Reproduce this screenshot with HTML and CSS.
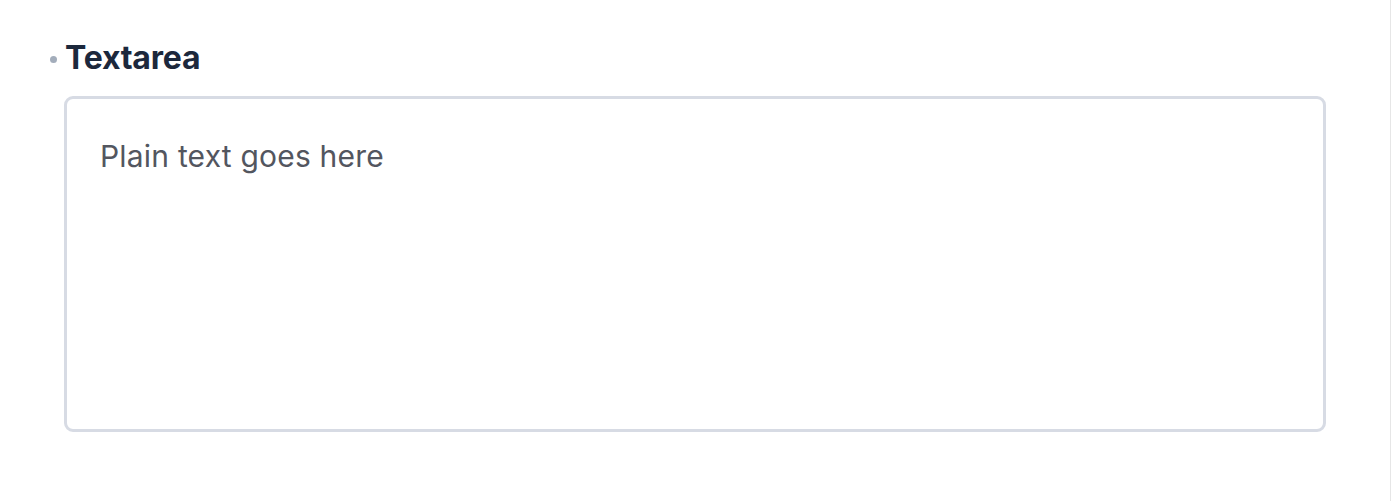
FILE: index.html
```html
<!DOCTYPE html>
<html lang="en">
<head>
<meta charset="utf-8">
<title>Textarea</title>
<link rel="stylesheet" href="styles.css">
</head>
<body>
<div class="page">
  <div class="field">
    <div class="label-row">
      <span class="dot"></span>
      <label class="label" for="ta">Textarea</label>
    </div>
    <textarea id="ta" class="textarea" placeholder="Plain text goes here"></textarea>
  </div>
</div>
</body>
</html>
```
FILE: styles.css
```css
html, body {
  margin: 0;
  padding: 0;
  background: #ffffff;
}
body {
  font-family: Inter, "Noto Sans", sans-serif;
}
.page {
  width: 1391px;
  height: 501px;
  box-sizing: border-box;
  border-right: 1px solid #e6e6e6;
  padding: 38px 0 0 50px;
}
.field {
  display: flex;
  flex-direction: column;
  gap: 18px;
  width: 1278px;
}
.label-row {
  display: flex;
  align-items: center;
  gap: 8px;
  height: 40px;
}
.dot {
  width: 7px;
  height: 7px;
  border-radius: 50%;
  background: #a3adbb;
  margin-top: 2px;
}
.label {
  font-size: 32px;
  line-height: 40px;
  font-weight: 700;
  letter-spacing: -0.2px;
  color: #1c283c;
}
.textarea {
  margin-left: 14px;
  width: 1262px;
  height: 336px;
  box-sizing: border-box;
  border: 3px solid #d7dbe4;
  border-radius: 9px;
  padding: 36px 33px;
  font-family: Inter, "Noto Sans", sans-serif;
  font-size: 30px;
  line-height: 42px;
  letter-spacing: 0.2px;
  color: #333;
  resize: none;
  outline: none;
  background: #fff;
}
.textarea::placeholder {
  color: #53565f;
  opacity: 1;
}
```
